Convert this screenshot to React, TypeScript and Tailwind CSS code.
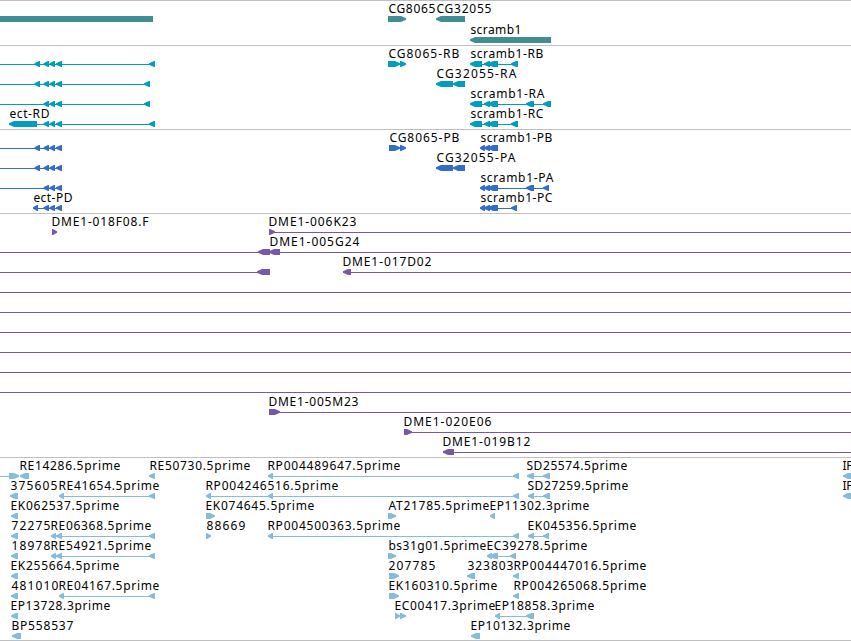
import React, { FunctionComponent } from "react";

type Kind = "<" | ">" | "=";
type Feature = {
  label?: string;
  at?: number;
  width?: number;
  line?: [number, number];
  parts?: [Kind, number, number][];
};
type Row = Feature[];

const genes: Row[] = [
  [
    { parts: [["=", 0, 153]] },
    { label: "CG8065", at: 388, width: 48, parts: [[">", 388, 406]] },
    { label: "CG32055", at: 436, width: 56, parts: [["<", 436, 465]] },
  ],
  [{ label: "scramb1", at: 470, width: 52, parts: [["<", 470, 551]] }],
];

const transcripts: Row[] = [
  [
    { line: [0, 155], parts: [["<", 34.5, 40], ["<", 43.5, 49], ["<", 49.5, 55], ["<", 56, 62], ["<", 149, 155]] },
    { label: "CG8065-RB", at: 388, width: 72, parts: [[">", 388, 400], [">", 400, 406]] },
    { label: "scramb1-RB", at: 470, width: 74, line: [482, 518], parts: [["<", 470, 482], ["<", 484, 490], ["<", 488, 498], ["<", 511, 518]] },
  ],
  [
    { line: [0, 150], parts: [["<", 34.5, 40], ["<", 43.5, 49], ["<", 49.5, 55], ["<", 56, 62], ["<", 144, 150]] },
    { label: "CG32055-RA", at: 436, width: 81, parts: [["<", 436, 453], ["<", 453, 465]] },
  ],
  [
    { line: [0, 150], parts: [["<", 43.5, 49], ["<", 49.5, 55], ["<", 56, 62], ["<", 144, 150]] },
    { label: "scramb1-RA", at: 470, width: 75, line: [482, 551], parts: [["<", 470, 482], ["<", 484, 490], ["<", 488, 498], ["<", 526, 534], ["<", 543, 551]] },
  ],
  [
    { label: "ect-RD", at: 9, width: 41, line: [9, 155], parts: [["<", 9, 37], ["<", 43.5, 49], ["<", 49.5, 55], ["<", 56, 62], ["<", 149, 155]] },
    { label: "scramb1-RC", at: 470, width: 74, line: [482, 518], parts: [["<", 470, 482], ["<", 484, 490], ["<", 488, 498], ["<", 511, 518]] },
  ],
];

const proteins: Row[] = [
  [
    { line: [0, 62], parts: [["<", 34.5, 40], ["<", 43.5, 49], ["<", 49.5, 55], ["<", 56, 62]] },
    { label: "CG8065-PB", at: 389, width: 71, parts: [[">", 389, 400], [">", 400, 406]] },
    { label: "scramb1-PB", at: 480, width: 73, parts: [["<", 480, 485], ["<", 484, 490], ["<", 488, 498]] },
  ],
  [
    { line: [0, 62], parts: [["<", 34.5, 40], ["<", 43.5, 49], ["<", 49.5, 55], ["<", 56, 62]] },
    { label: "CG32055-PA", at: 436, width: 80, parts: [["<", 436, 453], ["<", 453, 465]] },
  ],
  [
    { line: [0, 62], parts: [["<", 43.5, 49], ["<", 49.5, 55], ["<", 56, 62]] },
    { label: "scramb1-PA", at: 480, width: 74, line: [480, 549], parts: [["<", 480, 485], ["<", 484, 490], ["<", 488, 498], ["<", 526, 534], ["<", 543, 549]] },
  ],
  [
    { label: "ect-PD", at: 33, width: 40, line: [33, 62], parts: [["<", 33, 38], ["<", 43.5, 49], ["<", 49.5, 55], ["<", 56, 62]] },
    { label: "scramb1-PC", at: 480, width: 73, line: [480, 517], parts: [["<", 480, 485], ["<", 484, 490], ["<", 488, 498], ["<", 511, 517]] },
  ],
];

const clones: Row[] = [
  [
    { label: "DME1-018F08.F", at: 51, width: 98, parts: [[">", 52, 57]] },
    { label: "DME1-006K23", at: 268, width: 89, line: [269, 851], parts: [[">", 269, 275]] },
  ],
  [{ label: "DME1-005G24", at: 269, width: 91, line: [0, 851], parts: [["<", 258, 270], ["<", 269, 280]] }],
  [
    { line: [0, 270], parts: [["<", 257, 270]] },
    { label: "DME1-017D02", at: 342, width: 90, line: [343, 851], parts: [["<", 343, 351]] },
  ],
  [{ line: [0, 851] }],
  [{ line: [0, 851] }],
  [{ line: [0, 851] }],
  [{ line: [0, 851] }],
  [{ line: [0, 851] }],
  [{ line: [0, 851] }],
  [{ label: "DME1-005M23", at: 268, width: 91, line: [269, 851], parts: [[">", 269, 280]] }],
  [{ label: "DME1-020E06", at: 403, width: 89, line: [404, 851], parts: [[">", 404, 412]] }],
  [{ label: "DME1-019B12", at: 442, width: 89, line: [443, 851], parts: [["<", 443, 454]] }],
];

const insertions: Row[] = [
  [
    { line: [0, 19], parts: [[">", 9, 19]] },
    { label: "RE14286.5prime", at: 19, width: 102, parts: [["<", 20, 29]] },
    { label: "RE50730.5prime", at: 149, width: 102, parts: [["<", 149, 155]] },
    { label: "RP004489647.5prime", at: 267, width: 134, line: [268, 519], parts: [["<", 268, 273], ["<", 513, 519]] },
    { label: "SD25574.5prime", at: 526, width: 102, line: [527, 550], parts: [["<", 527, 534], ["<", 543, 550]] },
    { label: "IF", at: 842, width: 11, parts: [["<", 843, 854]] },
  ],
  [
    { label: "375605", at: 10, width: 48, parts: [["<", 10, 18]] },
    { label: "RE41654.5prime", at: 58, width: 102, line: [59, 155], parts: [["<", 59, 64], ["<", 149, 155]] },
    { label: "RP004246516.5prime", at: 205, width: 134, line: [206, 519], parts: [["<", 206, 211], ["<", 268, 273], ["<", 513, 519]] },
    { label: "SD27259.5prime", at: 527, width: 102, line: [528, 550], parts: [["<", 528, 534], ["<", 543, 550]] },
    { label: "IF", at: 842, width: 11, parts: [["<", 843, 854]] },
  ],
  [
    { label: "EK062537.5prime", at: 10, width: 110, parts: [["<", 11, 18]] },
    { label: "EK074645.5prime", at: 205, width: 110, parts: [[">", 206, 215]] },
    { label: "AT21785.5prime", at: 388, width: 102, parts: [[">", 388, 396]] },
    { label: "EP11302.3prime", at: 489, width: 101, parts: [["<", 490, 495]] },
  ],
  [
    { label: "72275", at: 11, width: 40, parts: [["<", 11, 18]] },
    { label: "RE06368.5prime", at: 50, width: 102, line: [51, 155], parts: [["<", 51, 56], ["<", 56, 62], ["<", 149, 155]] },
    { label: "88669", at: 206, width: 40, parts: [[">", 206, 211]] },
    { label: "RP004500363.5prime", at: 267, width: 134, line: [268, 519], parts: [["<", 268, 273], ["<", 513, 519]] },
    { label: "EK045356.5prime", at: 527, width: 110, line: [528, 549], parts: [["<", 528, 534], ["<", 543, 549]] },
  ],
  [
    { label: "18978", at: 11, width: 40, parts: [["<", 11, 18]] },
    { label: "RE54921.5prime", at: 50, width: 102, line: [51, 155], parts: [["<", 51, 56], ["<", 56, 62], ["<", 149, 155]] },
    { label: "bs31g01.5prime", at: 388, width: 99, parts: [[">", 388, 396]] },
    { label: "EC39278.5prime", at: 486, width: 102, line: [487, 516], parts: [["<", 487, 492], ["<", 490, 498], ["<", 510, 516]] },
  ],
  [
    { label: "EK255664.5prime", at: 10, width: 110, parts: [["<", 11, 18]] },
    { label: "207785", at: 388, width: 48, parts: [[">", 389, 399]] },
    { label: "323803", at: 467, width: 47, parts: [["<", 467, 475]] },
    { label: "RP004447016.5prime", at: 513, width: 134, parts: [["<", 513, 519]] },
  ],
  [
    { label: "481010", at: 11, width: 48, parts: [["<", 11, 18]] },
    { label: "RE04167.5prime", at: 58, width: 102, line: [59, 155], parts: [["<", 59, 64], ["<", 149, 155]] },
    { label: "EK160310.5prime", at: 388, width: 110, parts: [[">", 389, 399]] },
    { label: "RP004265068.5prime", at: 513, width: 134, parts: [["<", 513, 519]] },
  ],
  [
    { label: "EP13728.3prime", at: 10, width: 101, parts: [["<", 11, 18]] },
    { label: "EC00417.3prime", at: 394, width: 102, parts: [[">", 395, 400], [">", 400, 406]] },
    { label: "EP18858.3prime", at: 494, width: 101, line: [495, 534], parts: [["<", 495, 500], ["<", 526, 534]] },
  ],
  [
    { label: "BP558537", at: 11, width: 63, parts: [["<", 12, 21]] },
    { label: "EP10132.3prime", at: 470, width: 101, parts: [["<", 471, 480]] },
  ],
];

// outline of a bar, with the pointed end on the strand's side
const outline = (kind: Kind, from: number, to: number) => {
  if (kind === "=") return `${from},15 ${to},15 ${to},21 ${from},21`;
  const head = Math.min(5, to - from - 1);
  if (kind === "<")
    return `${from},17.2 ${from + head},15 ${to},15 ${to},21 ${from + head},21 ${from},18.8`;
  return `${to},17.2 ${to - head},15 ${from},15 ${from},21 ${to - head},21 ${to},18.8`;
};

const TrackRow: FunctionComponent<{ row: Row; height: number }> = ({
  row,
  height,
}) => {
  return (
    <svg
      width={851}
      height={height}
      className="block shrink-0 overflow-visible"
      fill="currentColor"
    >
      {row.map((feature, i) => (
        <g key={i}>
          {feature.line && (
            <rect
              x={feature.line[0]}
              y={18}
              width={feature.line[1] - feature.line[0]}
              height={1}
            />
          )}
          {feature.parts?.map(([kind, from, to]) => (
            <polygon key={from} points={outline(kind, from, to)} />
          ))}
          {feature.label && (
            <text
              x={feature.at! + 0.4}
              y={12}
              textLength={feature.width! - 1}
              className="fill-black text-[12px]"
            >
              {feature.label}
            </text>
          )}
        </g>
      ))}
    </svg>
  );
};

const Track: FunctionComponent<{
  rows: Row[];
  className: string;
  rowHeight?: number;
}> = ({ rows, className, rowHeight = 20 }) => {
  return (
    <section className={`flex flex-col border-t border-[#bfbfbf] ${className}`}>
      {rows.map((row, i) => (
        <TrackRow key={i} row={row} height={rowHeight} />
      ))}
    </section>
  );
};

export default function App() {
  return (
    <main className="flex h-[641px] w-[851px] flex-col overflow-hidden bg-white font-['Noto_Sans',sans-serif]">
      <Track rows={genes} rowHeight={21} className="pb-[2px] text-[#408e94]" />
      <Track rows={transcripts} className="pb-[3px] text-[#009dbf]" />
      <Track rows={proteins} className="pb-[3px] text-[#336dcb]" />
      <Track rows={clones} className="pb-[3px] text-[#7758a6]" />
      <Track rows={insertions} className="border-b pb-[2px] text-[#85bcde]" />
    </main>
  );
}
